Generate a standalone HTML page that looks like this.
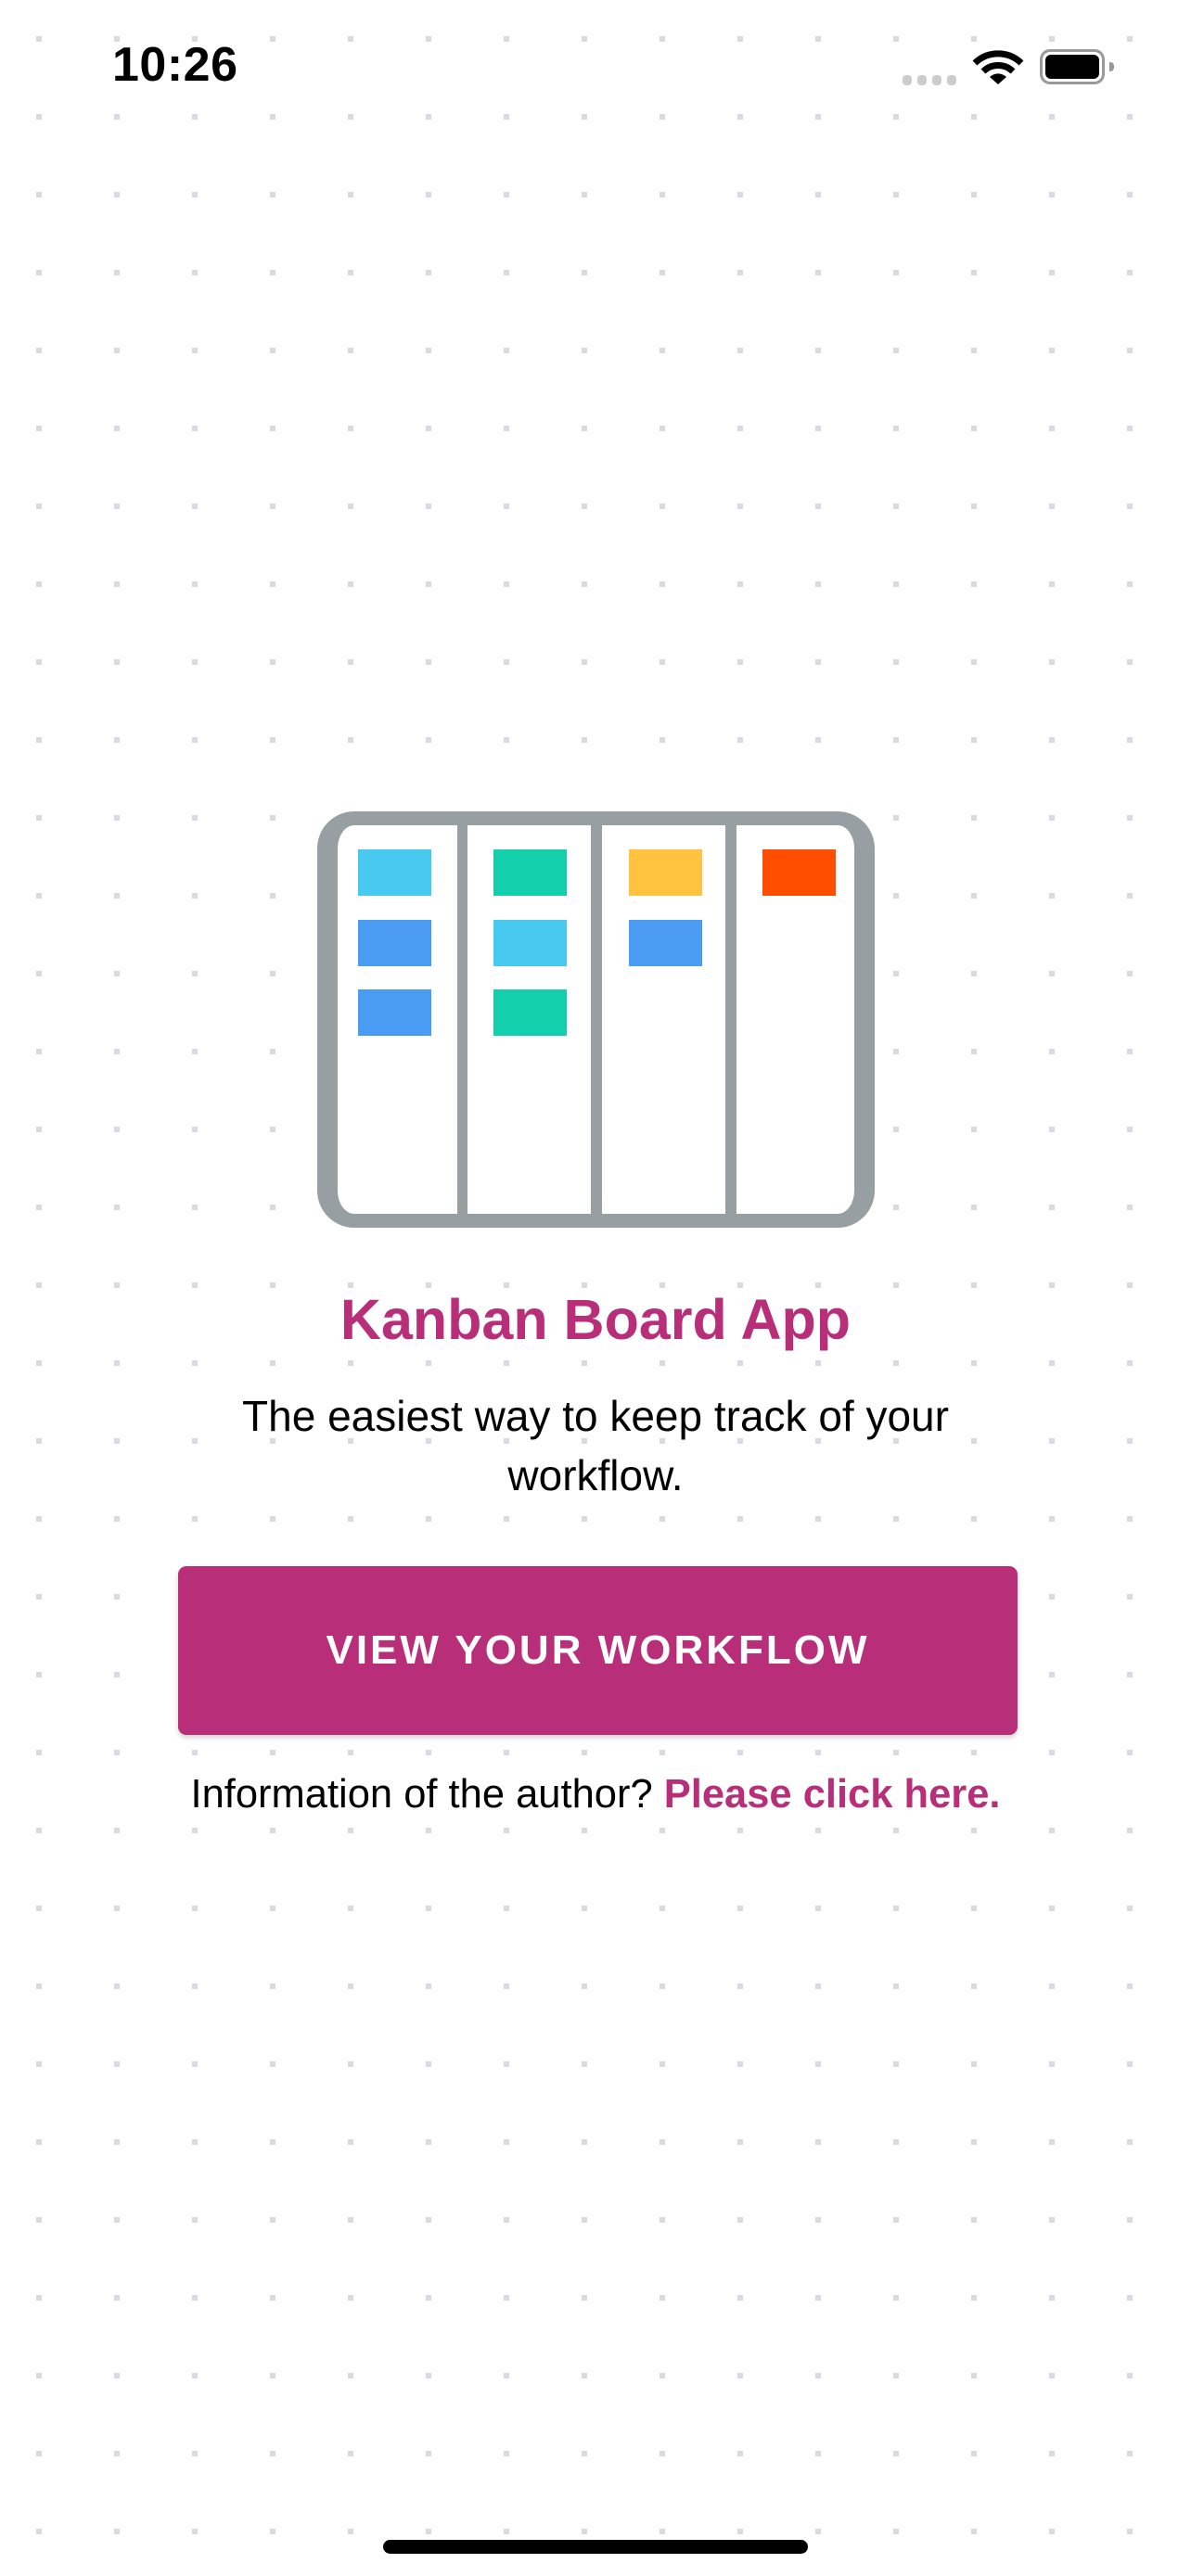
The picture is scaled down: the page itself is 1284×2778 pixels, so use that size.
<!DOCTYPE html>
<html><head><meta charset="utf-8"><style>
html,body{margin:0;padding:0}
body{width:1284px;height:2778px;position:relative;overflow:hidden;background-color:#fff;
font-family:"Liberation Sans",sans-serif}
.a{position:absolute}
.card{position:absolute;width:79px;height:50px}
</style></head><body>
<svg class="a" style="left:0;top:0" width="1284" height="2778">
<defs><pattern id="p" x="0" y="0" width="84" height="84" patternUnits="userSpaceOnUse">
<rect x="39" y="39" width="6" height="6" fill="#d9d9e3"/></pattern></defs>
<rect width="1284" height="2778" fill="url(#p)"/>
</svg>
<div class="a" style="left:121px;top:40px;font-size:52px;font-weight:bold;color:#000;letter-spacing:0.5px">10:26</div>
<div class="a" style="left:973px;top:81px;width:10px;height:11px;border-radius:4px;background:#ccc"></div>
<div class="a" style="left:989px;top:81px;width:10px;height:11px;border-radius:4px;background:#ccc"></div>
<div class="a" style="left:1005px;top:81px;width:10px;height:11px;border-radius:4px;background:#ccc"></div>
<div class="a" style="left:1021px;top:81px;width:10px;height:11px;border-radius:4px;background:#ccc"></div>
<svg class="a" style="left:1048px;top:54px" width="56" height="38" viewBox="0 0 56 38">
<path d="M3 14 A36 36 0 0 1 53 14" stroke="#000" stroke-width="7" fill="none"/>
<path d="M12 23 A23 23 0 0 1 44 23" stroke="#000" stroke-width="7" fill="none"/>
<path d="M28 37 L19 29 A13 13 0 0 1 37 29 Z" fill="#000"/>
</svg>
<div class="a" style="left:1121px;top:53px;width:64px;height:32px;border:3px solid #999;border-radius:11px"></div>
<div class="a" style="left:1127px;top:59px;width:58px;height:26px;background:#000;border-radius:6px"></div>
<div class="a" style="left:1196px;top:67px;width:5px;height:10px;background:#999;border-radius:0 4px 4px 0"></div>

<div class="a" style="left:342px;top:875px;width:557px;height:419px;border-style:solid;border-color:#989fa2;border-width:15px 22px;border-radius:40px;background:#fff"></div>
<div class="a" style="left:493px;top:890px;width:11px;height:419px;background:#989fa2"></div>
<div class="a" style="left:637px;top:890px;width:12px;height:419px;background:#989fa2"></div>
<div class="a" style="left:782px;top:890px;width:12px;height:419px;background:#989fa2"></div>
<div class="card" style="left:386px;top:916px;background:#48c9f0"></div>
<div class="card" style="left:386px;top:992px;background:#4a9cf2"></div>
<div class="card" style="left:386px;top:1067px;background:#4a9cf2"></div>
<div class="card" style="left:532px;top:916px;background:#13cfac"></div>
<div class="card" style="left:532px;top:992px;background:#48c9f0"></div>
<div class="card" style="left:532px;top:1067px;background:#13cfac"></div>
<div class="card" style="left:678px;top:916px;background:#ffc340"></div>
<div class="card" style="left:678px;top:992px;background:#4a9cf2"></div>
<div class="card" style="left:822px;top:916px;background:#ff4e00"></div>

<div class="a" style="left:0;width:1284px;top:1387px;text-align:center;font-size:61px;font-weight:bold;color:#b82e78;line-height:72px">Kanban Board App</div>
<div class="a" style="left:0;width:1284px;top:1495px;text-align:center;font-size:46px;color:#000;line-height:64px">The easiest way to keep track of your<br>workflow.</div>
<div class="a" style="left:192px;top:1689px;width:905px;height:182px;background:#b82e78;border-radius:9px;box-shadow:0 3px 6px rgba(0,0,0,0.18)"></div>
<div class="a" style="left:192px;width:905px;top:1754px;text-align:center;font-size:44px;font-weight:bold;color:#fff;letter-spacing:3px;line-height:52px">VIEW YOUR WORKFLOW</div>
<div class="a" style="left:0;width:1284px;top:1910px;text-align:center;font-size:43.5px;color:#000;line-height:50px">Information of the author? <span style="color:#b82e78;font-weight:bold">Please click here.</span></div>
<div class="a" style="left:413px;top:2739px;width:458px;height:15px;background:#000;border-radius:8px"></div>
</body></html>
